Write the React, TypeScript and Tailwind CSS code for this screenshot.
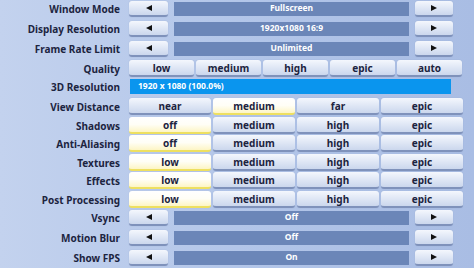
const FONT = { fontFamily: '"Noto Sans", "DejaVu Sans", sans-serif' };

// ── data ──────────────────────────────────────────────────────────────────────

type Row =
  | { kind: "arrow"; label: string; value: string; mt: string }
  | { kind: "quality"; label: string; mt: string }
  | { kind: "res"; label: string; value: string; mt: string }
  | { kind: "four"; label: string; options: string[]; selected: number; mt: string };

const ROWS: Row[] = [
  { kind: "arrow", label: "Window Mode", value: "Fullscreen", mt: "mt-0" },
  { kind: "arrow", label: "Display Resolution", value: "1920x1080 16:9", mt: "mt-[3px]" },
  { kind: "arrow", label: "Frame Rate Limit", value: "Unlimited", mt: "mt-[3px]" },
  { kind: "quality", label: "Quality", mt: "mt-[3px]" },
  { kind: "res", label: "3D Resolution", value: "1920 x 1080 (100.0%)", mt: "mt-[1px]" },
  { kind: "four", label: "View Distance", options: ["near", "medium", "far", "epic"], selected: 1, mt: "mt-[3px]" },
  { kind: "four", label: "Shadows", options: ["off", "medium", "high", "epic"], selected: 0, mt: "mt-[2px]" },
  { kind: "four", label: "Anti-Aliasing", options: ["off", "medium", "high", "epic"], selected: 0, mt: "mt-[1px]" },
  { kind: "four", label: "Textures", options: ["low", "medium", "high", "epic"], selected: 0, mt: "mt-[2px]" },
  { kind: "four", label: "Effects", options: ["low", "medium", "high", "epic"], selected: 0, mt: "mt-[1px]" },
  { kind: "four", label: "Post Processing", options: ["low", "medium", "high", "epic"], selected: 0, mt: "mt-[2px]" },
  { kind: "arrow", label: "Vsync", value: "Off", mt: "mt-[1px]" },
  { kind: "arrow", label: "Motion Blur", value: "Off", mt: "mt-[3px]" },
  { kind: "arrow", label: "Show FPS", value: "On", mt: "mt-[3px]" },
];

// ── pieces ────────────────────────────────────────────────────────────────────

function Btn({ children, selected, w, h = "h-[17px]" }: { children: React.ReactNode; selected?: boolean; w: string; h?: string }) {
  return (
    <div
      className={`${w} ${h} flex items-center justify-center rounded-[3px] text-[10px] font-bold text-[#1c2440] leading-none ${
        selected
          ? "bg-linear-to-b from-[#ffffff] via-[#fffef6] to-[#fdf5c4] border-b-[2px] border-[#eee060] shadow-[0_0_1px_#9fb0d2]"
          : "bg-linear-to-b from-[#f4f7fd] to-[#cbd7ed] border-b-[2px] border-[#7f92bb] shadow-[0_0_1px_#8ea0c6]"
      }`}
    >
      {children}
    </div>
  );
}

function Tri({ dir }: { dir: "l" | "r" }) {
  return (
    <svg width="6" height="6" viewBox="0 0 6 6">
      <path d={dir === "l" ? "M6 0 L0 3 L6 6 Z" : "M0 0 L6 3 L0 6 Z"} fill="#111" />
    </svg>
  );
}

function Control({ row }: { row: Row }) {
  if (row.kind === "arrow") {
    return (
      <div className="flex items-center gap-[6px]">
        <Btn w="w-[39px]" h="h-[16px]"><Tri dir="l" /></Btn>
        <div className="w-[235px] h-[14px] bg-[#6b86b8] flex items-center justify-center text-white text-[8.5px] font-bold">
          {row.value}
        </div>
        <Btn w="w-[38px]" h="h-[16px]"><Tri dir="r" /></Btn>
      </div>
    );
  }
  if (row.kind === "quality") {
    return (
      <div className="flex gap-[2px]">
        {["low", "medium", "high", "epic", "auto"].map((o) => (
          <Btn key={o} w="w-[65px]">{o}</Btn>
        ))}
      </div>
    );
  }
  if (row.kind === "res") {
    return (
      <div className="ml-[1px] w-[321px] h-[15px] bg-[#0a95ee] flex items-center pl-[8px] text-white text-[8.5px] font-bold">
        {row.value}
      </div>
    );
  }
  return (
    <div className="flex gap-[2px]">
      {row.options.map((o, i) => (
        <Btn key={o} w="w-[82px]" selected={i === row.selected}>{o}</Btn>
      ))}
    </div>
  );
}

// ── page ──────────────────────────────────────────────────────────────────────

export default function App() {
  return (
    <div
      className="w-[474px] h-[268px] overflow-hidden bg-linear-to-r from-[#c3d2ee] via-[#b3c6e9] to-[#a9bde4] flex flex-col"
      style={FONT}
    >
      {ROWS.map((row) => (
        <div key={row.label} className={`${row.mt} h-[17px] flex items-center`}>
          <div className="w-[120px] text-right text-[10px] font-bold text-[#1c2440] leading-none">
            {row.label}
          </div>
          <div className="ml-[9px]">
            <Control row={row} />
          </div>
        </div>
      ))}
    </div>
  );
}
